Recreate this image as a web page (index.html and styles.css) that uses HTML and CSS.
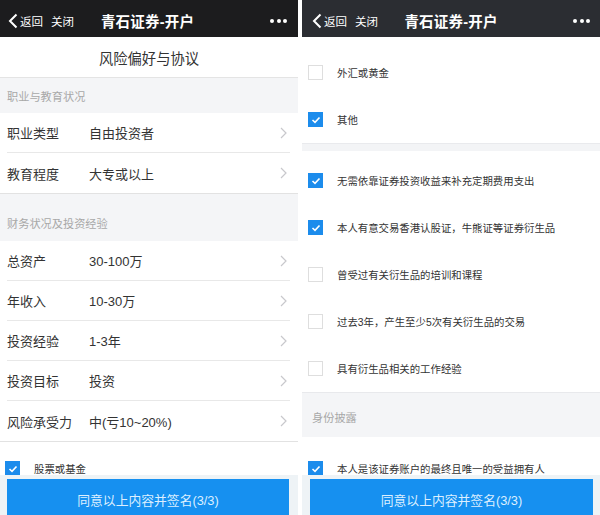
FILE: index.html
```html
<!DOCTYPE html>
<html lang="zh-CN">
<head>
<meta charset="utf-8">
<title>青石证券-开户</title>
<link rel="stylesheet" href="styles.css">
</head>
<body>
<div class="screen">
  <section class="phone">
    <header class="nav">
      <div class="nav-left">
        <svg class="back" width="10" height="16" viewBox="0 0 10 16"><polyline points="8.5,1.5 2,8 8.5,14.5" fill="none" stroke="#fff" stroke-width="2"/></svg>
        <span>返回</span><span class="close">关闭</span>
      </div>
      <div class="nav-title">青石证券-开户</div>
      <div class="nav-more"><i></i><i></i><i></i></div>
    </header>
    <div class="content">
      <div class="page-title">风险偏好与协议</div>
      <div class="section-head">职业与教育状况</div>
      <ul class="list">
        <li class="row"><span class="label">职业类型</span><span class="value">自由投资者</span><svg class="chev" width="7" height="12" viewBox="0 0 7 12"><polyline points="1,1 6,6 1,11" fill="none" stroke="#c8c8cc" stroke-width="1.2"/></svg></li>
        <li class="row"><span class="label">教育程度</span><span class="value">大专或以上</span><svg class="chev" width="7" height="12" viewBox="0 0 7 12"><polyline points="1,1 6,6 1,11" fill="none" stroke="#c8c8cc" stroke-width="1.2"/></svg></li>
      </ul>
      <div class="section-head tall">财务状况及投资经验</div>
      <ul class="list">
        <li class="row"><span class="label">总资产</span><span class="value">30-100万</span><svg class="chev" width="7" height="12" viewBox="0 0 7 12"><polyline points="1,1 6,6 1,11" fill="none" stroke="#c8c8cc" stroke-width="1.2"/></svg></li>
        <li class="row"><span class="label">年收入</span><span class="value">10-30万</span><svg class="chev" width="7" height="12" viewBox="0 0 7 12"><polyline points="1,1 6,6 1,11" fill="none" stroke="#c8c8cc" stroke-width="1.2"/></svg></li>
        <li class="row"><span class="label">投资经验</span><span class="value">1-3年</span><svg class="chev" width="7" height="12" viewBox="0 0 7 12"><polyline points="1,1 6,6 1,11" fill="none" stroke="#c8c8cc" stroke-width="1.2"/></svg></li>
        <li class="row"><span class="label">投资目标</span><span class="value">投资</span><svg class="chev" width="7" height="12" viewBox="0 0 7 12"><polyline points="1,1 6,6 1,11" fill="none" stroke="#c8c8cc" stroke-width="1.2"/></svg></li>
        <li class="row"><span class="label">风险承受力</span><span class="value">中(亏10~20%)</span><svg class="chev" width="7" height="12" viewBox="0 0 7 12"><polyline points="1,1 6,6 1,11" fill="none" stroke="#c8c8cc" stroke-width="1.2"/></svg></li>
      </ul>
      <div class="checks left-start">
        <div class="check-item"><span class="box on"><svg width="10" height="8" viewBox="0 0 10 8"><polyline points="1.5,4 4,6.3 8.5,1.5" fill="none" stroke="#fff" stroke-width="1.6"/></svg></span><span class="check-text">股票或基金</span></div>
      </div>
    </div>
    <footer class="footer"><div class="sign">同意以上内容并签名(3/3)</div></footer>
  </section>

  <section class="phone right">
    <header class="nav">
      <div class="nav-left">
        <svg class="back" width="10" height="16" viewBox="0 0 10 16"><polyline points="8.5,1.5 2,8 8.5,14.5" fill="none" stroke="#fff" stroke-width="2"/></svg>
        <span>返回</span><span class="close">关闭</span>
      </div>
      <div class="nav-title">青石证券-开户</div>
      <div class="nav-more"><i></i><i></i><i></i></div>
    </header>
    <div class="content">
      <div class="checks first">
        <div class="check-item"><span class="box"></span><span class="check-text">外汇或黄金</span></div>
        <div class="check-item"><span class="box on"><svg width="10" height="8" viewBox="0 0 10 8"><polyline points="1.5,4 4,6.3 8.5,1.5" fill="none" stroke="#fff" stroke-width="1.6"/></svg></span><span class="check-text">其他</span></div>
      </div>
      <div class="band"></div>
      <div class="checks">
        <div class="check-item"><span class="box on"><svg width="10" height="8" viewBox="0 0 10 8"><polyline points="1.5,4 4,6.3 8.5,1.5" fill="none" stroke="#fff" stroke-width="1.6"/></svg></span><span class="check-text">无需依靠证券投资收益来补充定期费用支出</span></div>
        <div class="check-item"><span class="box on"><svg width="10" height="8" viewBox="0 0 10 8"><polyline points="1.5,4 4,6.3 8.5,1.5" fill="none" stroke="#fff" stroke-width="1.6"/></svg></span><span class="check-text">本人有意交易香港认股证，牛熊证等证券衍生品</span></div>
        <div class="check-item"><span class="box"></span><span class="check-text">曾受过有关衍生品的培训和课程</span></div>
        <div class="check-item"><span class="box"></span><span class="check-text">过去3年，产生至少5次有关衍生品的交易</span></div>
        <div class="check-item"><span class="box"></span><span class="check-text">具有衍生品相关的工作经验</span></div>
      </div>
      <div class="section-head id-head">身份披露</div>
      <div class="checks last">
        <div class="check-item"><span class="box on"><svg width="10" height="8" viewBox="0 0 10 8"><polyline points="1.5,4 4,6.3 8.5,1.5" fill="none" stroke="#fff" stroke-width="1.6"/></svg></span><span class="check-text">本人是该证券账户的最终且唯一的受益拥有人</span></div>
      </div>
    </div>
    <footer class="footer"><div class="sign">同意以上内容并签名(3/3)</div></footer>
  </section>
</div>
</body>
</html>
```

FILE: styles.css
```css
* { box-sizing: border-box; }
html, body {
  margin: 0;
  padding: 0;
  background: #fff;
  font-family: "Liberation Sans", "Noto Sans CJK SC", sans-serif;
  color: #333;
}
.screen {
  display: flex;
  gap: 4px;
  width: 600px;
  height: 515px;
  overflow: hidden;
}
.phone {
  width: 298px;
  height: 515px;
  display: flex;
  flex-direction: column;
  background: #fff;
  overflow: hidden;
}
.nav {
  height: 37px;
  flex: none;
  background: #1c1c1e;
  color: #fff;
  display: grid;
  grid-template-columns: 1fr auto 1fr;
  align-items: center;
  padding: 4px 11px 0 8px;
}
.right .nav {
  background: #2b2d32;
  padding-left: 10px;
  padding-right: 10px;
}
.nav-left {
  display: flex;
  align-items: center;
  font-size: 11.5px;
}
.back { margin-right: 2px; }
.close { margin-left: 8px; }
.nav-title {
  font-size: 14.5px;
  font-weight: bold;
  letter-spacing: 0.2px;
}
.nav-more {
  justify-self: end;
  display: flex;
  gap: 2.5px;
}
.nav-more i {
  width: 4px;
  height: 4px;
  border-radius: 50%;
  background: #fff;
}
.content {
  flex: 1;
  overflow: hidden;
  min-height: 0;
}
.page-title {
  height: 41px;
  display: flex;
  align-items: center;
  justify-content: center;
  font-size: 14.3px;
  color: #333;
  border-bottom: 1px solid #e4e4e4;
}
.section-head {
  background: #f4f5f7;
  height: 35px;
  display: flex;
  align-items: flex-end;
  padding: 0 7px 9px;
  font-size: 11.2px;
  color: #a8a8a8;
  line-height: 14px;
}
.section-head.tall { height: 47px; padding-bottom: 10px; }
.section-head.id-head {
  height: 45px;
  padding: 0 10px 12px;
  border-top: 1px solid #e8e9ec;
}
.list {
  list-style: none;
  margin: 0;
  padding: 0;
  border-bottom: 1px solid #e2e2e2;
}
.row {
  height: 40px;
  display: flex;
  align-items: center;
  margin: 0 8px 0 7px;
  border-bottom: 1px solid #e8e8e8;
  font-size: 13px;
  color: #333;
}
.row:last-child { border-bottom: none; }
.label { width: 82px; flex: none; }
.value { flex: 1; }
.chev { margin-right: 3px; }
.checks { padding-top: 6px; }
.checks.left-start { padding-top: 3px; }
.checks.first { padding-top: 12px; }
.checks.last { padding-top: 8px; }
.check-item {
  height: 47px;
  display: flex;
  align-items: center;
  padding-left: 6px;
}
.left-start .check-item { padding-left: 5px; }
.box {
  width: 15px;
  height: 15px;
  flex: none;
  border: 1px solid #dedede;
  background: #fff;
  display: flex;
  align-items: center;
  justify-content: center;
  margin-right: 14px;
}
.box.on {
  background: #1c8cec;
  border-color: #1c8cec;
}
.check-text {
  font-size: 10.4px;
  color: #333;
}
.band {
  height: 8px;
  background: #f3f4f6;
  border-top: 1px solid #e9eaed;
}
.footer {
  height: 40px;
  flex: none;
  background: #eef3f6;
  padding: 4px 9px 0 7px;
  overflow: hidden;
}
.right .footer { padding: 4px 7px 0 8px; }
.sign {
  height: 40px;
  background: #1690f0;
  color: #dcefff;
  font-size: 12.8px;
  display: flex;
  align-items: center;
  justify-content: center;
}
```
